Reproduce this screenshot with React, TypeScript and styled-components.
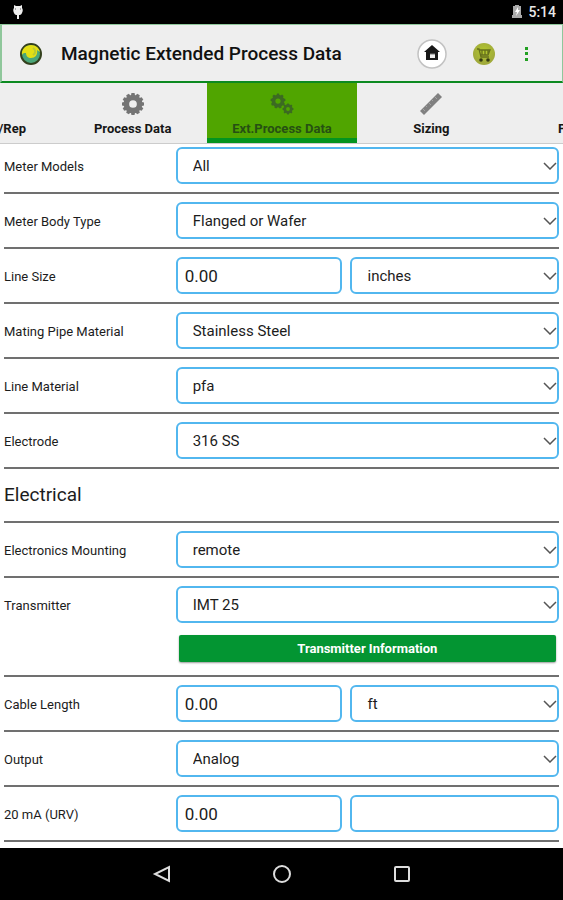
import React, { useId } from "react";
import styled, { createGlobalStyle } from "styled-components";

const Global = createGlobalStyle`
  * { box-sizing: border-box; }
  body { margin: 0; background: #fff; color: #1c1c1c; font-family: Roboto, "Liberation Sans", sans-serif; }
  button, input, select { font: inherit; color: inherit; margin: 0; }
`;

const Screen = styled.div`
  display: flex;
  flex-direction: column;
  min-height: 100vh;
`;

const StatusBar = styled.div`
  display: flex;
  align-items: center;
  justify-content: space-between;
  height: 24px;
  padding: 0 7px 0 12px;
  background: #000;
  color: #e8e8e8;
  font-size: 14px;
  font-weight: 500;
`;

const StatusInfo = styled.div`
  display: flex;
  align-items: center;
  gap: 6px;
`;

const Header = styled.header`
  display: flex;
  align-items: center;
  height: 59px;
  padding: 2px 18px 0 17px;
  background: #eee;
  border: solid #8fc79b;
  border-width: 1px 1px 2px 2px;
  border-bottom-color: #0c8a20;
`;

const Title = styled.h1`
  flex: 1;
  margin: 0 0 0 18px;
  color: #111;
  font-size: 19px;
  line-height: 24px;
  font-weight: 500;
  white-space: nowrap;
`;

const IconButton = styled.button<{ $width: number }>`
  display: grid;
  place-items: center;
  width: ${(p) => p.$width}px;
  height: 48px;
  padding: 0;
  border: 0;
  background: none;
`;

const TabBar = styled.nav`
  display: grid;
  grid-template-columns: 58px repeat(3, 1fr) 57px;
  height: 61px;
  background: #eee;
  border-bottom: 1px solid #ccc;
`;

const tabAlign = { start: "flex-end", middle: "center", end: "flex-start" };
const tabPadding = { start: "0 32px 6px 0", middle: "0 0 6px", end: "0 0 6px 52px" };

const Tab = styled.button<{ $active?: boolean; $place?: "start" | "middle" | "end" }>`
  display: flex;
  flex-direction: column;
  align-items: ${(p) => tabAlign[p.$place ?? "middle"]};
  justify-content: flex-end;
  gap: 5px;
  min-width: 0;
  overflow: hidden;
  padding: ${(p) => tabPadding[p.$place ?? "middle"]};
  border: 0;
  background: ${(p) => (p.$active ? "#50a500" : "none")};
  box-shadow: ${(p) => (p.$active ? "inset 0 -5px #039420" : "none")};
  color: ${(p) => (p.$active ? "#265013" : "#161616")};
  font-size: 13px;
  line-height: 16px;
  font-weight: 700;
  white-space: nowrap;
`;

const Form = styled.form`
  flex: 1;
  padding: 0 4px 5px;
`;

const Row = styled.div<{ $first?: boolean }>`
  display: grid;
  grid-template-columns: 43fr 96fr;
  padding: ${(p) => (p.$first ? 3 : 8)}px 0 8px;
  border-bottom: 2px solid #707070;
`;

const Label = styled.label`
  align-self: start;
  padding-top: 2px;
  font-size: 13px;
  line-height: 35px;
  white-space: nowrap;
`;

const Section = styled.h2`
  margin: 0;
  border-bottom: 2px solid #707070;
  font-size: 19px;
  line-height: 52px;
  font-weight: 400;
`;

const Controls = styled.div<{ $split?: boolean }>`
  display: grid;
  grid-template-columns: ${(p) => (p.$split ? "4fr 5fr" : "1fr")};
  gap: 8px;
`;

const SelectBox = styled.div`
  display: grid;
  grid-template-columns: 1fr 16px;
  align-items: center;
  min-width: 0;
`;

const Select = styled.select`
  grid-area: 1 / 1 / 2 / 3;
  width: 100%;
  height: 37px;
  padding: 0 24px 0 15px;
  appearance: none;
  border: 2px solid #52b7ef;
  border-radius: 6px;
  background: #fff;
  font-size: 15px;
`;

const Input = styled.input`
  width: 100%;
  min-width: 0;
  height: 37px;
  padding: 0 7px;
  border: 2px solid #52b7ef;
  border-radius: 6px;
  background: #fff;
  font-size: 17px;
`;

const Chevron = styled.svg`
  grid-area: 1 / 2;
  pointer-events: none;
`;

const InfoButton = styled.button`
  height: 27px;
  margin: 4px 3px 5px;
  padding: 0;
  border: 0;
  border-radius: 2px;
  background: #039532;
  box-shadow: 0 1px 2px #0006;
  color: #fff;
  font-size: 13px;
  font-weight: 700;
`;

const NavBar = styled.nav`
  display: flex;
  align-items: center;
  justify-content: center;
  gap: 72px;
  height: 52px;
  background: #000;
`;

const GearShape = ({ cx, cy, r, teeth }: { cx: number; cy: number; r: number; teeth: number }) => (
  <g transform={`translate(${cx} ${cy})`}>
    {Array.from({ length: teeth }, (_, i) => (
      <path
        key={i}
        d={`M${-r * 0.2} ${-r * 0.7}L${-r * 0.14} ${-r}H${r * 0.14}L${r * 0.2} ${-r * 0.7}Z`}
        transform={`rotate(${(360 / teeth) * i})`}
        fill="currentColor"
      />
    ))}
    <circle r={r * 0.6} fill="none" stroke="currentColor" strokeWidth={r * 0.5} />
  </g>
);

const GearIcon = () => (
  <svg width="24" height="24" color="#747474" aria-hidden="true">
    <GearShape cx={12} cy={12} r={11} teeth={12} />
  </svg>
);

const GearsIcon = () => (
  <svg width="24" height="24" color="#3c6a22" aria-hidden="true">
    <GearShape cx={8} cy={9} r={7.5} teeth={9} />
    <GearShape cx={18} cy={17} r={5.5} teeth={8} />
  </svg>
);

const RulerIcon = () => (
  <svg width="24" height="24" aria-hidden="true">
    <path d="M1 19 19 1 23 5 5 23Z" fill="#808080" />
    <path d="m4 17 2 2m1-5 1 1m2-4 2 2m1-5 1 1m2-4 2 2" stroke="#a4a4a4" />
  </svg>
);

const LogoIcon = () => (
  <svg width="24" height="24" aria-hidden="true">
    <circle cx="12" cy="12" r="10" fill="#4ba779" stroke="#33401d" strokeWidth="2" />
    <path d="M3 13C2 7 7 3 12 3c5 0 8 3 9 7l-3-2c1 5-2 8-6 8-3 0-5-2-5-5-2 0-3 0-4 2Z" fill="#e4df14" />
    <path d="M14 6c3 2 3 5 0 7" fill="none" stroke="#b9c936" strokeWidth="2" />
  </svg>
);

const HomeIcon = () => (
  <svg width="30" height="30" aria-hidden="true">
    <circle cx="15" cy="15" r="14" fill="#fff" stroke="#c2c2c2" strokeWidth="1.5" />
    <path d="m15 6 8 7h-2v8H9v-8H7Z" fill="#181818" />
    <path d="M13 15h5v4h-5Z" fill="#eee" />
    <path d="M13 15h5" stroke="#777" />
  </svg>
);

const CartIcon = () => (
  <svg width="24" height="24" aria-hidden="true">
    <defs>
      <radialGradient id="cart-ball" cx="50%" cy="40%">
        <stop offset="0" stopColor="#b4ca2c" />
        <stop offset="1" stopColor="#a1ab3b" />
      </radialGradient>
    </defs>
    <circle cx="12" cy="12" r="11" fill="url(#cart-ball)" />
    <path d="M5 7h2l2 8h8M7 8h11l-2 5H9M10 8v5m3-5v5m3-5v4" fill="none" stroke="#66701b" strokeWidth="1.3" />
    <circle cx="9" cy="18" r="1.8" fill="#353b12" />
    <circle cx="16" cy="18" r="1.8" fill="#353b12" />
  </svg>
);

const MoreIcon = () => (
  <svg width="4" height="16" fill="#22a022" aria-hidden="true">
    <path d="M0 1h3v3H0ZM0 6h3v3H0ZM0 12h3v3H0Z" />
  </svg>
);

const DroidIcon = () => (
  <svg width="12" height="16" aria-hidden="true">
    <path d="m2 1 2 1h4l2-1v3c1 1 1 3 0 5-1 2-2 2-3 2v4H5v-4c-1 0-2 0-3-2s-1-4 0-5Z" fill="#eee" />
    <path d="M3 5h1m4 0h1" stroke="#666" />
  </svg>
);

const BatteryIcon = () => (
  <svg width="10" height="14" aria-hidden="true">
    <path d="M3 0h4v1h2v9h1v3H0v-3h1V1h2Z" fill="#aaa" />
    <path d="M6 2 3 7h2l-1 4 4-6H6Z" fill="#fff" />
  </svg>
);

type FieldProps = { label: string; value?: string; amount?: string; first?: boolean; blankUnit?: boolean; children?: React.ReactNode };

const Field = ({ label, value, amount, first, blankUnit, children }: FieldProps) => {
  const id = useId();
  const split = amount !== undefined;
  return (
    <Row $first={first}>
      <Label htmlFor={id}>{label}</Label>
      <Controls $split={split}>
        {split && <Input id={id} defaultValue={amount} inputMode="decimal" />}
        {blankUnit ? (
          <Input aria-label={`${label} unit`} />
        ) : (
          <SelectBox>
            <Select id={split ? undefined : id} aria-label={split ? `${label} unit` : undefined} defaultValue={value}>
              <option>{value}</option>
            </Select>
            <Chevron width="14" height="8" aria-hidden="true">
              <path d="m1 1 6 6 6-6" fill="none" stroke="#555" strokeWidth="1.5" />
            </Chevron>
          </SelectBox>
        )}
        {children}
      </Controls>
    </Row>
  );
};

export default function App() {
  return (
    <Screen>
      <Global />
      <StatusBar>
        <DroidIcon />
        <StatusInfo>
          <BatteryIcon />
          <span>5:14</span>
        </StatusInfo>
      </StatusBar>
      <Header>
        <LogoIcon />
        <Title>Magnetic Extended Process Data</Title>
        <IconButton $width={52} aria-label="Home"><HomeIcon /></IconButton>
        <IconButton $width={52} aria-label="Cart"><CartIcon /></IconButton>
        <IconButton $width={34} aria-label="More options"><MoreIcon /></IconButton>
      </Header>
      <TabBar>
        <Tab $place="start">/Rep</Tab>
        <Tab><GearIcon />Process Data</Tab>
        <Tab $active aria-current="page"><GearsIcon />Ext.Process Data</Tab>
        <Tab><RulerIcon />Sizing</Tab>
        <Tab $place="end">P</Tab>
      </TabBar>
      <Form onSubmit={(e) => e.preventDefault()}>
        <Field first label="Meter Models" value="All" />
        <Field label="Meter Body Type" value="Flanged or Wafer" />
        <Field label="Line Size" amount="0.00" value="inches" />
        <Field label="Mating Pipe Material" value="Stainless Steel" />
        <Field label="Line Material" value="pfa" />
        <Field label="Electrode" value="316 SS" />
        <Section>Electrical</Section>
        <Field label="Electronics Mounting" value="remote" />
        <Field label="Transmitter" value="IMT 25">
          <InfoButton type="button">Transmitter Information</InfoButton>
        </Field>
        <Field label="Cable Length" amount="0.00" value="ft" />
        <Field label="Output" value="Analog" />
        <Field label="20 mA (URV)" amount="0.00" blankUnit />
      </Form>
      <NavBar>
        <IconButton $width={48} aria-label="Back">
          <svg width="20" height="20" fill="none" stroke="#ddd" strokeWidth="2"><path d="M17 3v14L3 10Z" /></svg>
        </IconButton>
        <IconButton $width={48} aria-label="Home screen">
          <svg width="20" height="20" fill="none" stroke="#ddd" strokeWidth="2"><circle cx="10" cy="10" r="8" /></svg>
        </IconButton>
        <IconButton $width={48} aria-label="Recent apps">
          <svg width="20" height="20" fill="none" stroke="#ddd" strokeWidth="2"><rect x="3" y="3" width="14" height="14" rx="1" /></svg>
        </IconButton>
      </NavBar>
    </Screen>
  );
}
